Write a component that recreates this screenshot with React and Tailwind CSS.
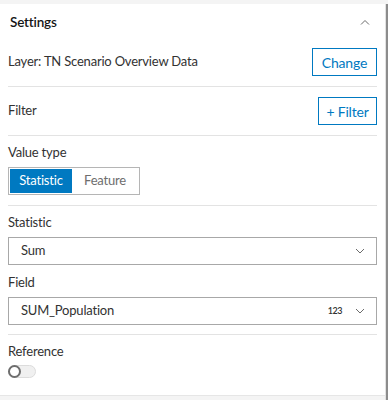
import React, { useState } from 'react';

function Chevron({ up = false }) {
  return (
    <svg width="10" height="6" viewBox="0 0 10 6" className="block">
      <path
        d={up ? 'M1 5.5 L5 1.5 L9 5.5' : 'M1 1 L5 5 L9 1'}
        fill="none"
        stroke="#6b6b6b"
        strokeWidth="1"
      />
    </svg>
  );
}

function Divider() {
  return <div className="h-px bg-[#e3e3e3]" />;
}

export default function App() {
  const [valueType, setValueType] = useState('statistic');
  const [reference, setReference] = useState(false);

  return (
    <div
      className="w-[388px] h-[400px] bg-[#f4f4f4] pt-[4px] flex text-[13px] tracking-[-0.2px] text-[#323232]"
      style={{ fontFamily: 'Lato, "Noto Sans", sans-serif' }}
    >
      <div className="w-[385px] h-[392px] bg-white border-b border-[#e6e6e6] flex flex-col">
        {/* Header */}
        <div className="h-[36px] pl-[10px] pr-[15px] flex items-center justify-between">
          <span className="text-[13.5px] font-semibold text-[#151515]">Settings</span>
          <Chevron up />
        </div>

        <div className="px-[8px]">
          {/* Layer */}
          <div className="pt-[8px] pb-[10px] flex items-center justify-between">
            <span>Layer: TN Scenario Overview Data</span>
            <button className="h-[28px] w-[65px] border border-[#0079c1] text-[#0079c1] text-[14px]">
              Change
            </button>
          </div>
          <Divider />

          {/* Filter */}
          <div className="pt-[10px] pb-[10px] flex items-center justify-between">
            <span>Filter</span>
            <button className="h-[28px] w-[59px] border border-[#0079c1] text-[#0079c1] text-[14px]">
              + Filter
            </button>
          </div>
          <Divider />

          {/* Value type */}
          <div className="pt-[7px] pb-[10px]">
            <div className="h-[20px] flex items-center">Value type</div>
            <div className="mt-[4px] w-[132px] h-[28px] border border-[#b5b5b5] p-px flex">
              <button
                onClick={() => setValueType('statistic')}
                className={
                  valueType === 'statistic'
                    ? 'w-[62px] bg-[#0079c1] text-white'
                    : 'w-[62px] text-[#6e6e6e]'
                }
              >
                Statistic
              </button>
              <button
                onClick={() => setValueType('feature')}
                className={
                  valueType === 'feature'
                    ? 'flex-1 bg-[#0079c1] text-white'
                    : 'flex-1 text-[#6e6e6e]'
                }
              >
                Feature
              </button>
            </div>
          </div>
          <Divider />

          {/* Statistic + Field */}
          <div className="pt-[7px] pb-[9px]">
            <div className="h-[20px] flex items-center">Statistic</div>
            <div className="mt-[4px] h-[28px] border border-[#a8a8a8] pl-[12px] pr-[11px] flex items-center justify-between">
              <span>Sum</span>
              <Chevron />
            </div>
            <div className="mt-[8px] h-[20px] flex items-center">Field</div>
            <div className="mt-[4px] h-[28px] border border-[#a8a8a8] pl-[12px] pr-[11px] flex items-center justify-between">
              <span>SUM_Population</span>
              <div className="flex items-center gap-[13px]">
                <span className="text-[9px] font-semibold tracking-[-0.5px] text-[#323232]">123</span>
                <Chevron />
              </div>
            </div>
          </div>
          <Divider />

          {/* Reference */}
          <div className="pt-[7px]">
            <div className="h-[20px] flex items-center">Reference</div>
            <button
              onClick={() => setReference(!reference)}
              className={
                reference
                  ? 'mt-[3px] w-[28px] h-[13px] rounded-full bg-[#0079c1] border border-[#0079c1] flex justify-end'
                  : 'mt-[3px] w-[28px] h-[13px] rounded-full bg-[#f0f0f0] border border-[#dcdcdc] flex'
              }
            >
              <span className="-mt-px -ml-px w-[13px] h-[13px] rounded-full bg-white border-2 border-[#6e6e6e]" />
            </button>
          </div>
        </div>
      </div>
      <div className="w-px h-full bg-[#e2e2e2]" />
      <div className="w-[2px] h-full bg-[#8c8c8c]" />
    </div>
  );
}
